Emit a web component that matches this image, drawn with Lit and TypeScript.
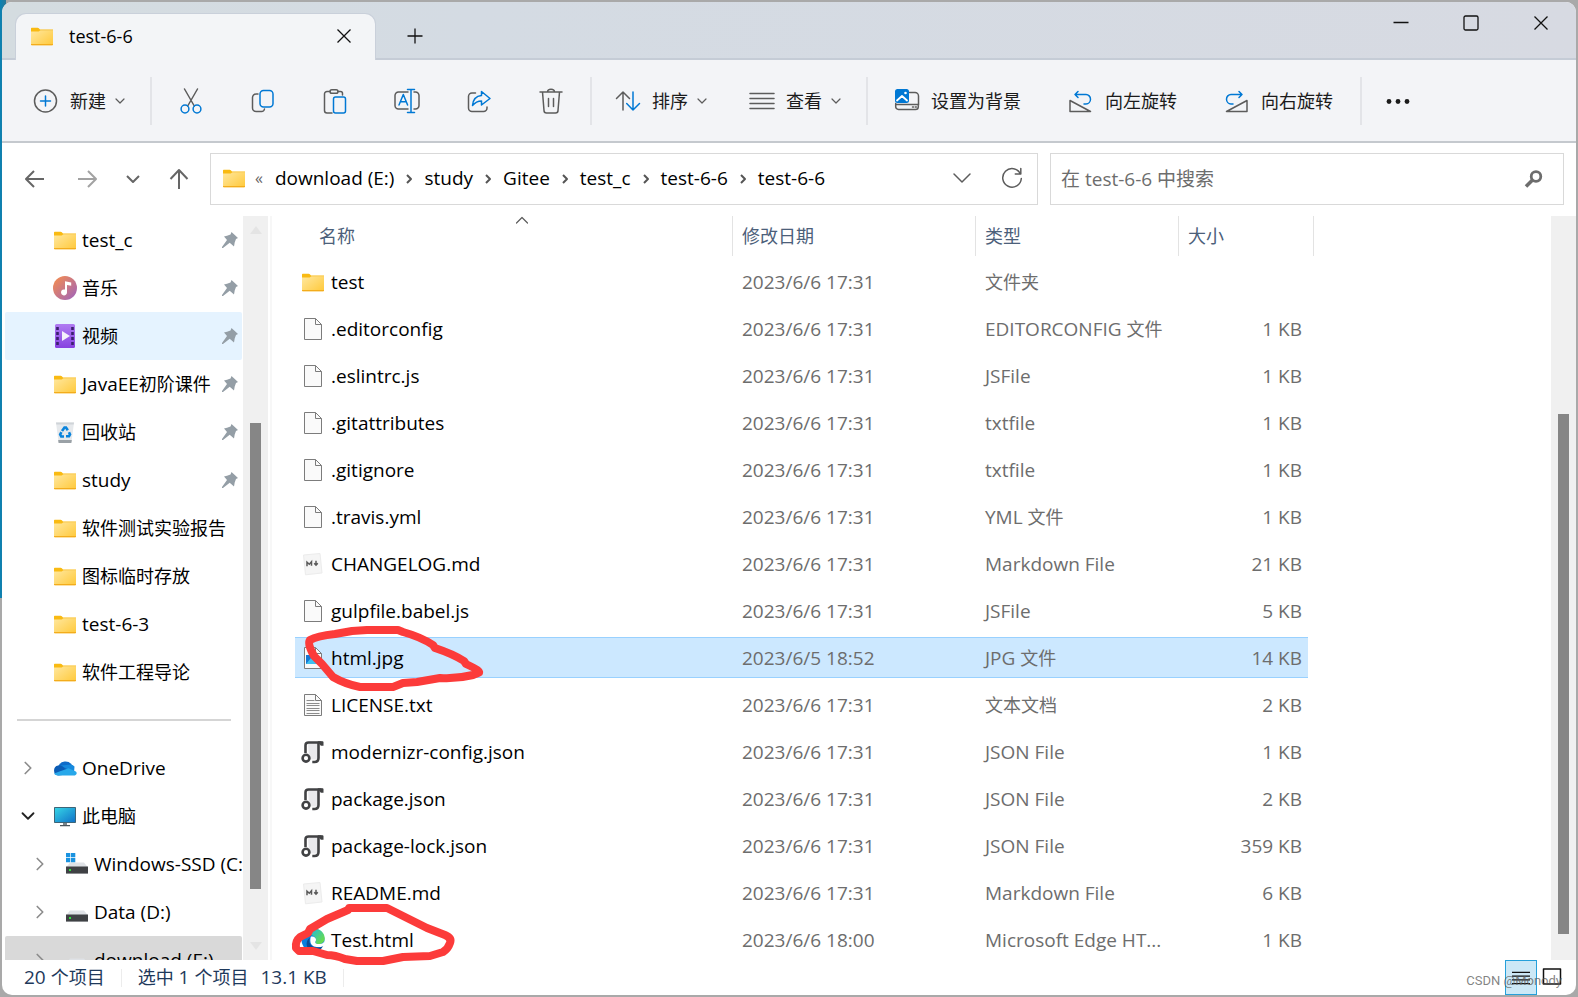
import { LitElement, html, svg, css, nothing } from "lit";
import { customElement, state } from "lit/decorators.js";

const folder = svg`
  <path d="M1 4.6h6.6l1.6 1.8H23v14.1a.8.8 0 0 1-.8.8H1.8a.8.8 0 0 1-.8-.8z" fill="url(#fg)"/>
  <path d="M1 4.7c0-.6.4-1 1-1h5.7c.5 0 .8.2 1.1.5L10 5.5h13v1H10.6c-.7 0-1 .2-1.5.7-.4.3-.7.4-1.2.4H1z" fill="#f9ba12"/>
  <path d="M1 20h22v.6c0 .4-.3.7-.7.7H1.7c-.4 0-.7-.3-.7-.7z" fill="#f3ac1c"/>`;
const page = svg`<path d="M3.5 1.5h11l6 6v15h-17z" fill="#fafafa" stroke="#7c7c7c"/><path d="M14.5 1.5v6h6" fill="none" stroke="#7c7c7c"/>`;
const drive = svg`<path d="M5 10.500h14l4 5H1z" fill="#dfe2e6"/><rect x="1" y="14.500" width="22" height="7.500" fill="#3f4144"/><rect x="1" y="21" width="22" height="1" fill="#8a8c8f"/><rect x="4" y="17" width="2" height="2" fill="#2ee03c"/>`;

const pictures: Record<string, unknown> = {
  folder,
  page,
  music: svg`<circle cx="12" cy="12" r="12" fill="url(#mg)"/><path d="M12 5.200l6.200 1.300v3.300L14 9v7.200a3 3 0 1 1-2-2.600z" fill="#fff"/>`,
  video: svg`<rect x="2" width="20" height="24" rx="1.500" fill="url(#vg)"/><path d="M3.200 3h2.600v3H3.200zm0 5h2.600v3H3.200zm0 5h2.600v3H3.200zm0 5h2.600v3H3.200zM18.200 3h2.600v3h-2.600zm0 5h2.600v3h-2.600zm0 5h2.600v3h-2.600zm0 5h2.600v3h-2.600z" fill="#3b1f6e"/><path d="M9 7l8 5-8 5z" fill="#f4f0fb"/>`,
  bin: svg`<path d="M3 2.500h18l-2.500 19.500h-13z" fill="#e6e9ec"/><path d="M3 2.500h18l-.3 2H3.300z" fill="#cfd4d8"/><path d="M5.200 20h13.600l-.4 3H5.600z" fill="#9aa1a6"/><g fill="none" stroke="#0a84dc" stroke-width="2.600"><path d="M9 11l2.500-3.500h1.500l1.800 2.700"/><path d="M16 12.200l1 2.200-1 1.900h-3"/><path d="M11 16.500H8.200l-1-2 1.200-2.300"/></g>`,
  cloud: svg`<path d="M5 10.500a8 8 0 0 1 14-1.500l-6 7z" fill="#0f6cc9"/><path d="M8 9.500L21 17l.5-6.500A6 6 0 0 0 16 8.700z" fill="#1689dd"/><path d="M5.500 19.500A5 5 0 0 1 5.200 9.600a7 7 0 0 1 4.300 1L18 18z" fill="#0b5cb5"/><path d="M1 17.500l14.500-5.200 7.300 3.200c1.800 1.300.7 4-1.800 4H5.500c-2 0-3.500-.6-4.500-2z" fill="#28a8ea"/>`,
  computer: svg`<rect x="1" y="3" width="22" height="16" rx=".8" fill="#3d6578"/><rect x="2" y="4" width="20" height="14" fill="url(#cg)"/><path d="M10 19h4v2h-4z" fill="#7b858b"/><path d="M7 21h10v1.200H7z" fill="#4c565c"/>`,
  system: svg`${drive}<path d="M1 1h4.300v4.300H1zm5 0h4.300v4.300H6zM1 6h4.300v4.300H1zm5 0h4.300v4.300H6z" fill="#1a93e0"/>`,
  drive,
  markdown: svg`<path d="M2.500 3l16.500-1.500 2 19.500-16.500 1.800z" fill="#f5f5f5" stroke="#ececec"/><path d="M6 14.200v-4l2.300 2 2.200-2.400v4M15 8.800v4M13.200 11.200l1.800 1.900 1.800-1.900" fill="none" stroke="#5a5a5a" stroke-width="1.500"/>`,
  image: svg`${page}<rect x="5" y="9" width="12" height="9" fill="#1478d4"/><path d="M5 18l5-6 7 6z" fill="#3fc0f0"/>`,
  text: svg`${page}<path d="M5.500 7.500h8M5.500 10.500h13M5.500 12.500h13M5.500 15.500h13M5.500 17.500h13M5.500 20.500h13" stroke="#8c8c8c"/>`,
  json: svg`<path d="M7 2.500h10v17H8z" fill="#e9e9ec"/><path d="M4.500 13V5.500c0-2 1-3 3-3h13M17.500 3v15c0 2.500-1.300 4-4 4h-2.200" fill="none" stroke="#414244" stroke-width="2.600"/><path d="M16.500 1.200h4.800c.8 0 1.200.5 1.200 1.200v3.400h-2.700z" fill="#414244"/><circle cx="5" cy="18.200" r="3.400" fill="#fff" stroke="#414244" stroke-width="2.600"/>`,
  edge: svg`<circle cx="12" cy="12" r="11.500" fill="#0b7fdc"/><path d="M1.500 9.500C3.500 3.500 8 .5 13 .5c6.500 0 10.700 4.800 10.700 9.700 0 3.700-3 5.800-5.800 5.800-2.700 0-3.700-1-3.700-1.600 0-.6.800-.8.800-2.300 0-2.300-2.300-5-5.900-5-3.300 0-6 1-7.600 2.400z" fill="url(#eg)"/><path d="M9.200 9.500c-2.200 3.800-.2 9.500 6 10 3 .2 5-.6 7-1.600-2.300 4.300-6.500 6-10.500 5.500-7-1.200-8.200-10.900-2.500-13.900z" fill="#0c4c96"/><path d="M10 8.600c3-.8 5.300 1.400 5 3.500-.1 1.200-.8 1.700-.8 2.300 0 .8 1.500 2.100 4.800 1.600 2-.3 3.500-1.200 4.700-2.800.3 2-.3 3.700-1.200 4.700-5.500 2.300-11.800 1.300-13-3.700-.4-2.300-.1-4.300.5-5.600z" fill="#fff"/>`,
};

const glyphs: Record<string, unknown> = {
  plusCircle: svg`<circle cx="11.500" cy="12" r="11"/><path class="blue" d="M11.500 7v10M6.500 12h10"/>`,
  cut: svg`<path d="M5.500 0l9.800 17M18.500 0L8.700 17"/><circle class="blue" cx="6" cy="20" r="3.900"/><circle class="blue" cx="18" cy="20" r="3.900"/>`,
  copy: svg`<path d="M7 5H5a3.500 3.500 0 0 0-3.500 3.500V19A3.500 3.500 0 0 0 5 22.500h5.500A3 3 0 0 0 13.500 20"/><rect class="blue" x="9" y="1.500" width="13" height="16.500" rx="3.500"/>`,
  paste: svg`<path d="M7 2.500H4A2.500 2.500 0 0 0 1.500 5v16.500A2.500 2.500 0 0 0 4 24h5M15 2.500h2.500A2 2 0 0 1 19.500 4.500V6"/><rect x="7" y=".7" width="8" height="3.600" rx="1.800"/><rect class="blue" x="10.500" y="8" width="12" height="16" rx="2"/>`,
  rename: svg`<path d="M13 3H3.500A3.500 3.500 0 0 0 0 6.500v10A3.500 3.500 0 0 0 3.500 20H13M19 3h1.500A3.500 3.500 0 0 1 24 6.500v10a3.500 3.500 0 0 1-3.500 3.500H19"/><path class="blue" d="M4 16l4.300-10.500L12.600 16M5.500 12.800h5.600M16 .5v23M12.500.5h7M12.500 23.500h7"/>`,
  share: svg`<path d="M8.500 4H5a3.500 3.500 0 0 0-3.500 3.500V19A3.500 3.500 0 0 0 5 22.500h11.500A3.500 3.500 0 0 0 20 19v-1"/><path class="blue" d="M14.500 2.500L23 9.500l-8.500 6.500v-4c-4 0-6.500 1.500-9 4.500.5-6 3.500-9.500 9-10z"/>`,
  trash: svg`<path d="M1 3h22M8.500 3c0-3.800 7-3.800 7 0M3.500 3L5 21.500A2.500 2.500 0 0 0 7.500 24h9a2.500 2.500 0 0 0 2.500-2.500L20.500 3M9.500 9.500v8M14.500 9.500v8"/>`,
  sort: svg`<path d="M7 21V3M.5 9.500L7 3l6.500 6.500"/><path class="blue" d="M17 3v18M10.700 14.500L17 21l6.500-6.500"/>`,
  view: svg`<path d="M0 4.500h24M0 9.500h24M0 14.500h24M0 19.500h24"/>`,
  wallpaper: svg`<path d="M14.500 3.500H20A3.500 3.500 0 0 1 23.500 7v9M.7 14.500v3A2.800 2.800 0 0 0 3.500 20.500h17a2.800 2.800 0 0 0 2.800-2.800V15.500H.7M17.500 18h1M20.300 18h1"/><rect x="0" y="0" width="14" height="14" rx="2.500" fill="#0078d4" stroke="none"/><path d="M2 11.500l5-4.500 5 4.500" stroke="#fff" stroke-width="1.800"/><circle cx="10.500" cy="4" r="1.300" fill="#fff" stroke="none"/>`,
  rotateLeft: svg`<path d="M1 11.500v11h20.500z"/><path class="blue" d="M9 2.500L6 5.500l3 3M6 5.500h11a4.500 4.700 0 0 1 0 9.400h-2"/>`,
  rotateRight: svg`<path d="M22 11.500v11H1.500z"/><path class="blue" d="M14 2.500l3 3-3 3M17 5.500H6a4.500 4.700 0 0 0 0 9.400h2"/>`,
  more: svg`<g fill="#1b1b1b" stroke="none"><circle cx="3" cy="12.500" r="2.400"/><circle cx="12" cy="12.500" r="2.400"/><circle cx="21" cy="12.500" r="2.400"/></g>`,
  caret: svg`<path d="M8 10l4 4 4-4"/>`,
  back: svg`<path d="M21 12H3.500M11 4l-8 8 8 8"/>`,
  forward: svg`<path d="M3 12h17.500M13 4l8 8-8 8"/>`,
  down: svg`<path d="M6 9l6 6 6-6"/>`,
  up: svg`<path d="M12 22V3.500M3.500 12L12 3l8.500 9"/>`,
  wide: svg`<path d="M4 8l8 8 8-8"/>`,
  refresh: svg`<path d="M20.500 8A9.300 9.300 0 1 0 21.300 12.500M20.800 2.500V8h-5.500"/>`,
  right: svg`<path d="M10 9l4 4-4 4"/>`,
  branch: svg`<path d="M9 6l6 6-6 6"/>`,
  close: svg`<path d="M5.500 5.500l13 13M18.500 5.500l-13 13"/>`,
  plus: svg`<path d="M12 4.500v15M4.500 12h15"/>`,
  minimize: svg`<path d="M4.500 11.500h15"/>`,
  maximize: svg`<rect x="5" y="5" width="14" height="14" rx="1.500"/>`,
  sorted: svg`<path d="M6.500 15l5.500-5.500 5.500 5.500"/>`,
};

const icon = (name: string, cls = "") => html`<svg class="icon ${cls}" viewBox="0 0 24 24" aria-hidden="true">${pictures[name]}</svg>`;
const glyph = (name: string, cls = "") => html`<svg class="icon line ${cls}" viewBox="0 0 24 24" aria-hidden="true">${glyphs[name]}</svg>`;

/* Han runs are set one step smaller than the Latin text beside them. */
const mixed = (text: string) =>
  text.split(/([\u4e00-\u9fff]+)/).filter(Boolean).map((run) => (/[\u4e00-\u9fff]/.test(run) ? html`<b class="han">${run}</b>` : run));

interface Place { label: string; icon: string; pinned?: boolean; hot?: boolean; current?: boolean; branch?: string; depth?: number; }
const quick: Place[] = [
  { label: "test_c", icon: "folder", pinned: true },
  { label: "音乐", icon: "music", pinned: true },
  { label: "视频", icon: "video", pinned: true, hot: true },
  { label: "JavaEE初阶课件", icon: "folder", pinned: true },
  { label: "回收站", icon: "bin", pinned: true },
  { label: "study", icon: "folder", pinned: true },
  { label: "软件测试实验报告", icon: "folder" },
  { label: "图标临时存放", icon: "folder" },
  { label: "test-6-3", icon: "folder" },
  { label: "软件工程导论", icon: "folder" },
];
const devices: Place[] = [
  { label: "OneDrive", icon: "cloud", branch: "branch" },
  { label: "此电脑", icon: "computer", branch: "down" },
  { label: "Windows-SSD (C:)", icon: "system", branch: "branch", depth: 1 },
  { label: "Data (D:)", icon: "drive", branch: "branch", depth: 1 },
  { label: "download (E:)", icon: "drive", branch: "branch", depth: 1, current: true },
];

const T = "2023/6/6 17:31";
const files: [string, string, string, string, string][] = [
  ["folder", "test", T, "文件夹", ""],
  ["page", ".editorconfig", T, "EDITORCONFIG 文件", "1 KB"],
  ["page", ".eslintrc.js", T, "JSFile", "1 KB"],
  ["page", ".gitattributes", T, "txtfile", "1 KB"],
  ["page", ".gitignore", T, "txtfile", "1 KB"],
  ["page", ".travis.yml", T, "YML 文件", "1 KB"],
  ["markdown", "CHANGELOG.md", T, "Markdown File", "21 KB"],
  ["page", "gulpfile.babel.js", T, "JSFile", "5 KB"],
  ["image", "html.jpg", "2023/6/5 18:52", "JPG 文件", "14 KB"],
  ["text", "LICENSE.txt", T, "文本文档", "2 KB"],
  ["json", "modernizr-config.json", T, "JSON File", "1 KB"],
  ["json", "package.json", T, "JSON File", "2 KB"],
  ["json", "package-lock.json", T, "JSON File", "359 KB"],
  ["markdown", "README.md", T, "Markdown File", "6 KB"],
  ["edge", "Test.html", "2023/6/6 18:00", "Microsoft Edge HT...", "1 KB"],
];

/* Hand-drawn loops, in the coordinates of the row that they ring. */
const ink: Record<string, string> = {
  "html.jpg": "M57 -3L72 -4 103 -4 108 -2Q126 3 138 11L140 14Q158 20 169 27L171 30Q188 38 183 39 L178 41Q162 45 145 44L122 48 108 49 98 53 65 53Q50 50 38 43L27 30 19 22Q12 10 15 6Q22 2 40 0Z",
  "Test.html": "M53 -6L54 -8 92 -8 132 12 150 19Q157 22 155 27Q153 33 148 36L135 40 108 41 88 45 62 45 50 43Q40 39 32 39L18 35 4 35 1 32Q0 25 5 21L13 17 15 13 32 3Z",
};

@customElement("app-root")
export class AppRoot extends LitElement {
  @state() private selected = "html.jpg";

  static styles = css`
    :host { display: block; height: 100vh; min-height: 600px; overflow: hidden; box-sizing: border-box; padding: 2px;
      background: linear-gradient(90deg, #0a82b4 0, #2c7896 6px, transparent 6px) 0 0 / 100% 60% no-repeat, #a9a9a9;
      color: #000; font: 19px/24px "Open Sans", "Noto Sans CJK SC", sans-serif; }
    * { box-sizing: border-box; }
    button, input { font: inherit; color: inherit; background: none; border: 0; padding: 0; margin: 0; }
    a { color: inherit; text-decoration: none; }
    .han { font-size: 18px; font-weight: 400; }
    .icon { width: 24px; height: 24px; flex: none; display: block; overflow: visible; }
    .line { fill: none; stroke: #5c5c5c; stroke-width: 1.5; stroke-linecap: round; stroke-linejoin: round; }
    .line .blue { stroke: #0078d4; }
    .defs { position: absolute; width: 0; height: 0; }
    .window { height: 100%; display: grid; grid-template-rows: auto auto auto 1fr auto; grid-template-columns: minmax(0, 1fr); background: #fff; border-radius: 10px; overflow: hidden; }

    .titlebar { display: flex; height: 58px; background: linear-gradient(90deg, #d4dce0, #d4dbe3 30%, #d7dae2); box-shadow: inset 0 -2px #c5ccd6; padding-left: 13px; }
    .tab { display: flex; align-items: center; width: 361px; margin-top: 11px; padding: 0 19px 2px 14px; background: #f3f5f7; border: 1px solid #c9d0da; border-bottom: 0; border-radius: 11px 11px 0 0; }
    .tab span { flex: 1; margin-left: 15px; font-size: 18px; }
    .newtab { width: 78px; margin-top: 11px; padding-bottom: 2px; display: grid; place-items: center; }
    .black { stroke: #111; stroke-width: 1.3; stroke-linecap: butt; }
    .controls { margin-left: auto; display: flex; height: 41px; }
    .controls button { width: 70px; display: grid; place-items: center; }

    .toolbar { display: flex; align-items: center; height: 83px; padding-left: 22px; background: #f3f4f7; border-bottom: 2px solid #c5c9ce; white-space: nowrap; }
    .tool { display: flex; align-items: center; gap: 12px; height: 48px; padding: 0 10px; color: #1b1b1b; font-size: 18px; }
    .tool .caret { width: 24px; margin: 0 -8px 0 -10px; stroke-width: 1.2; }
    .group { display: flex; }
    .icons { gap: 26px; padding-left: 2px; }
    .icons .tool { width: 46px; padding: 0 11px; }
    .menus { gap: 24px; }
    .wide { gap: 28px; padding: 0 1px 0 3px; }
    .rule { width: 2px; height: 48px; margin: 0 14px 0 16px; background: #e3e4e8; }

    .nav { display: grid; grid-template-columns: 196px minmax(0, 828fr) minmax(0, 514fr); gap: 12px; padding: 10px 12px 11px 0; }
    .moves { display: flex; align-items: center; padding-left: 21px; gap: 22px; }
    .moves button:first-child { margin-right: 6px; }
    .moves .line { stroke-width: 2; stroke: #666; stroke-linecap: butt; }
    .moves .dim { stroke: #a2a2a2; }
    .box { display: flex; align-items: center; height: 52px; border: 1px solid #d9d9d9; background: #fff; min-width: 0; }
    .address { padding: 0 13px 2px 11px; white-space: nowrap; }
    .crumbs { display: flex; align-items: center; flex: 1; min-width: 0; overflow: hidden; }
    .crumbs .line { margin: 0 3px; stroke: #555; stroke-width: 2; stroke-linecap: butt; }
    .more { margin: 0 12px 0 8px; color: #666; font-size: 16px; }
    .address > button { margin-left: 26px; }
    .address > .icon { margin-right: 1px; }
    .search { padding: 0 17px 0 10px; }
    .search input { flex: 1; min-width: 0; outline: 0; }
    .search input::placeholder { color: #6d6d6d; opacity: 1; }

    .body { display: flex; min-height: 0; }
    .side { display: flex; width: 266px; flex: none; overflow: hidden; }
    .tree { flex: 1; min-width: 0; margin: 0 1px 0 3px; overflow: hidden; }
    .tree ul { list-style: none; margin: 0; padding: 0; }
    .tree a { display: flex; align-items: center; height: 48px; padding: 0 4px 0 12px; border-radius: 2px; white-space: nowrap; overflow: hidden; }
    .tree .branch { width: 22px; height: 22px; margin-right: 14px; stroke: #8c8c8c; stroke-width: 1.8; }
    .tree .open { stroke: #222; stroke-width: 2; }
    .tree .blank { width: 36px; flex: none; }
    .tree .deep { padding-left: 24px; }
    .tree .hot { background: #e5f3ff; }
    .tree .current { background: #d9d9d9; }
    .tree span { margin: 0 auto 0 5px; }
    .pin { width: 16px; height: 16px; flex: none; }
    .divider { height: 2px; margin: 23px 11px 23px 12px; border: 0; background: #d5d5d5; }
    .bar { width: 25px; flex: none; display: flex; flex-direction: column; align-items: center; background: #f0f0f0; }
    .bar i { width: 11px; background: #868686; }
    .bar.left { justify-content: space-between; padding: 10px 0; }
    .bar.left i { flex: 466; }
    .bar.left .before { flex: 189; }
    .bar.left .after { flex: 53; }
    .bar .before, .bar .after { background: none; }
    .bar.right i { flex: 520; }
    .bar.right .before { flex: 198; }
    .bar.right .after { flex: 26; }
    .arrow { width: 12px; height: 8px; }

    .main { flex: 1; min-width: 0; display: flex; border-left: 2px solid #f7f7f7; margin-left: 2px; }
    .list { flex: 1; min-width: 0; padding-left: 23px; }
    table { border-collapse: separate; border-spacing: 0; table-layout: fixed; width: 1019px; margin-bottom: -8px; }
    th { height: 40px; padding: 0 0 0 9px; text-align: left; font-weight: 400; color: #4c607a; border-right: 1px solid #e3e3e3; }
    th:first-child { padding-left: 24px; position: relative; }
    th .sorted { position: absolute; top: -8px; left: 215px; stroke-width: 1.2; }
    td { height: 47px; padding: 0 0 0 9px; color: #6d6d6d; white-space: nowrap; }
    td.size { text-align: right; padding-right: 12px; }
    td.name { color: #000; padding-left: 6px; position: relative; }
    .file { display: flex; align-items: center; gap: 6px; }
    .gap td { height: 2px; padding: 0; }
    .picked { background:
      linear-gradient(#99d1ff, #99d1ff) 0 3px / calc(100% - 6px) 1px no-repeat,
      linear-gradient(#99d1ff, #99d1ff) 0 43px / calc(100% - 6px) 1px no-repeat,
      linear-gradient(#cce8ff, #cce8ff) 0 3px / calc(100% - 6px) 41px no-repeat; }
    .ink { position: absolute; left: 0; top: 0; width: 200px; height: 47px; overflow: visible; fill: none; stroke: #fc3b3a; stroke-width: 8; stroke-linecap: round; stroke-linejoin: round; pointer-events: none; }

    .status { display: flex; align-items: center; height: 35px; padding: 0 14px 0 22px; color: #1e395b; position: relative; white-space: nowrap; }
    .status span { padding-bottom: 2px; }
    .status .sep { width: 1px; height: 18px; margin: 0 16px; background: #ececec; }
    .status .bytes { margin-left: 12px; }
    .views { margin-left: auto; display: flex; gap: 5px; height: 35px; }
    .views button { display: grid; place-items: center; width: 20px; }
    .views .on { width: 32px; background: #cce8f6; border: 1px solid #26a0da; }
    .views .icon { width: 18px; stroke: #111; stroke-linecap: butt; }
    .mark { position: absolute; right: 14px; bottom: 2px; font: 13px/20px Roboto, sans-serif; color: rgba(90, 90, 90, 0.75); }
  `;

  private tool(name: string, label: string, text = "", caret = false) {
    return html`<button class="tool" aria-label=${label}>${glyph(name)}${text ? html`<span>${text}</span>` : nothing}${caret ? glyph("caret", "caret") : nothing}</button>`;
  }

  private place(p: Place) {
    return html`<li><a href="#" class="${p.depth ? "deep" : ""} ${p.hot ? "hot" : ""} ${p.current ? "current" : ""}">
      ${p.branch ? glyph(p.branch, p.branch === "down" ? "branch open" : "branch") : html`<i class="blank"></i>`}
      ${icon(p.icon)}<span>${mixed(p.label)}</span>
      ${p.pinned ? html`<svg class="pin" viewBox="0 0 16 16" aria-hidden="true"><path d="M9.500 0L16 6l-2 1-1.300 3.500-.7 4-4.300-3.800L1 16H0v-1l5-7L2 4.500l3-.8 3.500-1.200z" fill="#949ea6"/></svg>` : nothing}
    </a></li>`;
  }

  render() {
    return html`
      <svg class="defs" aria-hidden="true"><defs>
        <linearGradient id="fg" x1="0" y1="0" x2="1" y2="1"><stop offset="0" stop-color="#ffe9a4"/><stop offset="1" stop-color="#ffc93a"/></linearGradient>
        <linearGradient id="mg" x1="0" y1="0" x2="1" y2="1"><stop offset=".1" stop-color="#f08a55"/><stop offset=".9" stop-color="#a566b4"/></linearGradient>
        <linearGradient id="vg" x1="0" y1="0" x2="0" y2="1"><stop offset="0" stop-color="#b07cf2"/><stop offset="1" stop-color="#8741e0"/></linearGradient>
        <linearGradient id="cg" x1="0" y1="0" x2="1" y2="1"><stop offset="0" stop-color="#35d4e6"/><stop offset="1" stop-color="#1173c8"/></linearGradient>
        <linearGradient id="eg" x1="0" y1="0" x2="1" y2=".6"><stop offset="0" stop-color="#1c9bdc"/><stop offset=".5" stop-color="#33c3b8"/><stop offset="1" stop-color="#66db50"/></linearGradient>
      </defs></svg>
      <div class="window">
        <header class="titlebar">
          <div class="tab">${icon("folder")}<span>test-6-6</span><button aria-label="关闭标签页">${glyph("close", "black")}</button></div>
          <button class="newtab" aria-label="新标签页">${glyph("plus", "black")}</button>
          <div class="controls">
            <button aria-label="最小化">${glyph("minimize", "black")}</button>
            <button aria-label="最大化">${glyph("maximize", "black")}</button>
            <button aria-label="关闭">${glyph("close", "black")}</button>
          </div>
        </header>
        <div class="toolbar" role="toolbar">
          ${this.tool("plusCircle", "新建", "新建", true)}
          <i class="rule"></i>
          <div class="group icons">
            ${this.tool("cut", "剪切")}${this.tool("copy", "复制")}${this.tool("paste", "粘贴")}${this.tool("rename", "重命名")}${this.tool("share", "共享")}${this.tool("trash", "删除")}
          </div>
          <i class="rule"></i>
          <div class="group menus">${this.tool("sort", "排序", "排序", true)}${this.tool("view", "查看", "查看", true)}</div>
          <i class="rule"></i>
          <div class="group wide">
            ${this.tool("wallpaper", "设置为背景", "设置为背景")}${this.tool("rotateLeft", "向左旋转", "向左旋转")}${this.tool("rotateRight", "向右旋转", "向右旋转")}
          </div>
          <i class="rule"></i>
          ${this.tool("more", "更多")}
        </div>
        <nav class="nav">
          <div class="moves">
            <button aria-label="后退">${glyph("back")}</button>
            <button aria-label="前进">${glyph("forward", "dim")}</button>
            <button aria-label="最近">${glyph("down")}</button>
            <button aria-label="上移">${glyph("up")}</button>
          </div>
          <div class="box address">
            ${icon("folder")}
            <div class="crumbs"><span class="more">«</span>
              ${["download (E:)", "study", "Gitee", "test_c", "test-6-6", "test-6-6"].map((c, i) => html`${i ? glyph("right") : nothing}<a href="#">${c}</a>`)}
            </div>
            <button aria-label="以前的位置">${glyph("wide")}</button>
            <button aria-label="刷新">${glyph("refresh")}</button>
          </div>
          <div class="box search">
            <input type="search" aria-label="搜索" placeholder="在 test-6-6 中搜索">
            <svg class="icon" viewBox="0 0 24 24" fill="none" stroke="#6d6d6d" aria-hidden="true"><circle cx="14" cy="9.500" r="4.800" stroke-width="2.800"/><path d="M10.500 13L4 19.500" stroke-width="3.600"/></svg>
          </div>
        </nav>
        <div class="body">
          <aside class="side">
            <div class="tree">
              <ul>${quick.map((p) => this.place(p))}</ul>
              <hr class="divider">
              <ul>${devices.map((p) => this.place(p))}</ul>
            </div>
            <div class="bar left">
              <svg class="arrow" viewBox="0 0 12 8"><path d="M6 0l6 8H0z" fill="#e4e4e4"/></svg>
              <i class="before"></i><i></i><i class="after"></i>
              <svg class="arrow" viewBox="0 0 12 8"><path d="M6 8l6-8H0z" fill="#e4e4e4"/></svg>
            </div>
          </aside>
          <main class="main">
            <div class="list">
              <table>
                <colgroup><col style="width:438px"><col style="width:243px"><col style="width:203px"><col></colgroup>
                <thead><tr><th>${mixed("名称")}${glyph("sorted", "sorted")}</th><th>${mixed("修改日期")}</th><th>${mixed("类型")}</th><th>${mixed("大小")}</th></tr></thead>
                <tbody>
                  <tr class="gap"><td colspan="4"></td></tr>
                  ${files.map(([pic, name, date, type, size]) => html`
                    <tr class=${name === this.selected ? "picked" : ""} @click=${() => (this.selected = name)}>
                      <td class="name"><div class="file">${icon(pic)}<span>${name}</span></div>
                        ${ink[name] ? html`<svg class="ink" viewBox="0 0 200 47" aria-hidden="true"><path d=${ink[name]}/></svg>` : nothing}</td>
                      <td>${date}</td><td>${mixed(type)}</td><td class="size">${size}</td>
                    </tr>`)}
                </tbody>
              </table>
            </div>
            <div class="bar right"><i class="before"></i><i></i><i class="after"></i></div>
          </main>
        </div>
        <footer class="status">
          <span>${mixed("20 个项目")}</span><i class="sep"></i><span>${mixed("选中 1 个项目")}</span><span class="bytes">13.1 KB</span><i class="sep"></i>
          <div class="views">
            <button class="on" aria-label="详细信息">${glyph("view")}</button>
            <button aria-label="大缩略图"><svg class="icon line" viewBox="0 0 18 24" aria-hidden="true"><path d="M.500 3h17v15h-17z"/></svg></button>
          </div>
          <span class="mark">CSDN @Monody</span>
        </footer>
      </div>`;
  }
}
